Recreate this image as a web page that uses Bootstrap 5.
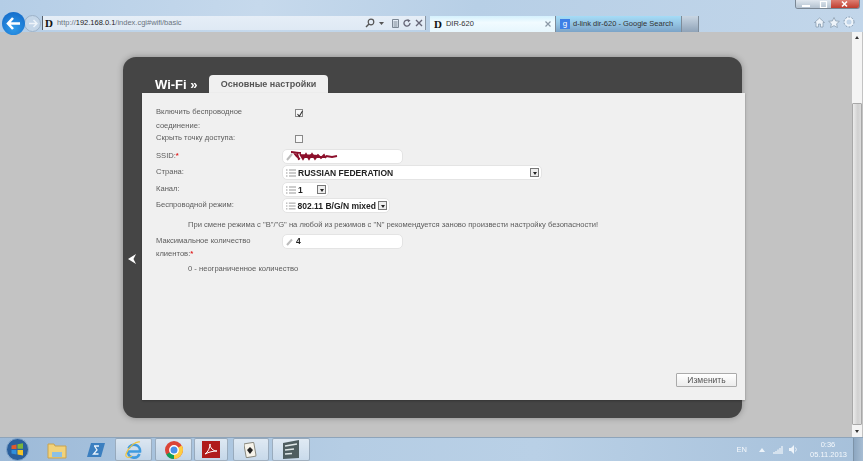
<!DOCTYPE html>
<html lang="ru">
<head>
    <meta charset="UTF-8">
    <meta name="viewport" content="width=device-width, initial-scale=1">
    <title>DIR-620</title>
    <link href="https://cdn.jsdelivr.net/npm/bootstrap@5.3.0/dist/css/bootstrap.min.css" rel="stylesheet">
    <style>
        html, body { height: 100%; overflow: hidden; }
        body { font-family: "Liberation Sans", Arial, sans-serif; background: #c3c3c3; filter: blur(.35px); }
        .ie-top { height: 32px; background: linear-gradient(100deg, #b4cde6 0%, #c6d9ec 30%, #b7cfe6 55%, #c2d6ea 100%); position: relative; padding-top: 16px; }
        .ie-back { width: 23px; height: 23px; border-radius: 50%; background: radial-gradient(circle at 50% 70%, #2f9bea, #0f63c4); margin-left: 2px; margin-top: -4px; z-index: 2; flex: none; }
        .ie-fwd { width: 17px; height: 17px; border-radius: 50%; background: #c4d6e8; border: 1px solid #9db2c8; margin-left: -1px; margin-top: -1px; flex: none; }
        .ie-addr { width: 384px; height: 14px; margin-left: 1px; background: linear-gradient(#e6eef7, #dfe9f4); border-left: 1px solid #56606c; border-right: 1px solid #8a97a5; font-size: 7.5px; color: #6a7480; padding: 0 2px 0 2px; flex: none; }
        .ie-addr b { font-weight: 400; color: #222; }
        .ie-d { font-family: "Liberation Serif", serif; font-weight: 700; font-size: 11px; color: #111; line-height: 1; }
        .ie-tab { width: 126px; height: 16px; font-size: 7.5px; padding-left: 4px; color: #333; flex: none; border-right: 1px solid #7e8c9a; }
        .ie-tab.on { background: linear-gradient(#d4f1fd, #f1fbff 40%, #e6f6fd); margin-left: 0; }
        .ie-tab.off { background: linear-gradient(#a5dcf7, #93c3e2 50%, #7ba3c7); }
        .ie-newtab { width: 17px; height: 16px; background: linear-gradient(#c9d6e3, #8fa3b8); border-right: 1px solid #7e8c9a; flex: none; }
        .g-box { width: 10px; height: 10px; background: #3d7fe6; color: #fff; font-size: 8px; line-height: 10px; text-align: center; margin-right: 3px; }
        .win-btns { position: absolute; top: 0; left: 795px; width: 65px; height: 9px; border: 1px solid #7a8794; border-top: 0; border-radius: 0 0 3px 3px; overflow: hidden; }
        .win-btns span { display: block; height: 100%; position: relative; }
        .win-min { width: 20px; background: linear-gradient(#dfe7ef, #b4c2d0); }
        .win-max { width: 15px; background: linear-gradient(#dfe7ef, #b4c2d0); }
        .win-close { flex: 1; background: linear-gradient(#dd7f73, #bf3d2f); }
        .win-ic { position: absolute; left: 0; top: 0; }
        .ie-tools { position: absolute; left: 814px; top: 16px; gap: 3px; }

        .page-zone { height: 405px; }
        .page-main { flex: 1; padding: 25px 0 0 123px; }
        .dl-frame { width: 619px; height: 361px; background: #454545; border-radius: 13px; box-shadow: 0 0 6px rgba(0, 0, 0, .3); padding: 18px 0 0 0; }
        .dl-head { height: 18px; padding-left: 32px; }
        .dl-title { color: #fff; font-size: 13px; font-weight: 700; width: 54px; line-height: 16px; }
        .dl-tab { width: 119px; height: 18px; background: #f0f0f0; border-radius: 4px 4px 0 0; font-size: 9px; font-weight: 700; color: #555; text-align: center; line-height: 18px; }
        .dl-body-row { height: 307px; }
        .dl-side { width: 19px; flex: none; padding-top: 161px; padding-left: 5px; }
        .dl-panel { width: 603px; flex: none; background: #f0f0f0; padding: 12px 8px 0 14px; position: relative; color: #5c5c5c; font-size: 7.6px; line-height: 14px; box-shadow: 0 1px 2px rgba(0,0,0,.25); }
        .fld-row { display: flex; }
        .row-check { height: 26px; }
        .row-hide { height: 18px; }
        .row-ssid { height: 16px; }
        .row-country { height: 17px; }
        .row-channel { height: 16px; }
        .row-mode { height: 20px; }
        .row-clients { height: 28px; line-height: 13px; }
        .fld-label { width: 126px; flex: none; padding-right: 24px; }
        .chk-box { width: 8px; height: 8px; border: 1px solid #888; background: #f8f8f8; margin-left: 13px; margin-top: 4px; position: relative; }
        .req { color: #e02020; font-weight: 700; line-height: 1; }
        .fld-input, .fld-select { background: #fff; height: 15px; border-radius: 5px; border: 1px solid #e4e4e4; font-size: 8.5px; font-weight: 700; color: #222; display: flex; align-items: center; padding-left: 3px; gap: 2px; white-space: nowrap; }
        .fld-input { width: 121px; }
        .sel-wide { width: 260px; }
        .sel-small { width: 47px; }
        .sel-mode { width: 108px; }
        .sel-arrow { width: 9px; height: 9px; border: 1px solid #777; background: #eee; margin-left: auto; margin-right: 2px; position: relative; flex: none; }
        .sel-arrow::after { content: ""; position: absolute; left: 1.5px; top: 3px; border: 2.5px solid transparent; border-top: 3px solid #222; border-bottom: 0; }
        .fld-note { padding-left: 32px; }
        .note-gap { margin-bottom: 2px; }
        .dl-save { position: absolute; right: 8px; bottom: 13px; width: 61px; height: 14px; font-size: 8.5px; line-height: 12px; color: #555; padding: 0; background: linear-gradient(#fff, #ececec); border: 1px solid #aaa; border-radius: 1px; }

        .ie-scroll { width: 10px; margin-right: 1px; background: #f4f4f4; position: relative; flex: none; }
        .ie-thumb { position: absolute; left: 0; right: 0; top: 71px; bottom: 12px; background: linear-gradient(90deg, #ececec, #d0d0d0 60%, #dcdcdc); border: 1px solid #a8a8a8; border-radius: 1px; }
        .scr-up, .scr-down { position: absolute; left: 3px; border: 2px solid transparent; }
        .scr-up { top: 4px; border-bottom: 3px solid #333; border-top: 0; }
        .scr-down { bottom: 4px; border-top: 3px solid #333; border-bottom: 0; }

        .win-bar { height: 24px; background: linear-gradient(90deg, #9dbad8 0%, #b5cde4 40%, #b9d0e6 62%, #a6c0da 100%); position: relative; border-top: 1px solid #8ea4ba; }
        .tb-slot { width: 37px; height: 23px; flex: none; }
        .tb-slot.act { background: linear-gradient(rgba(255,255,255,.6), rgba(255,255,255,.3)); border: 1px solid rgba(110,130,150,.55); border-radius: 2px; }
        .tray-txt { color: #f4f8fc; font-size: 7.5px; line-height: 10px; text-align: center; }
        .tray-clock { margin-left: 12px; width: 36px; }
        .show-desk { width: 10px; height: 23px; background: linear-gradient(90deg, #8da7c1, #a7bdd3); border-left: 1px solid #7d93a8; margin-left: 7px; }
        .ml-1px { margin-left: 1px; }
        .ml-2px { margin-left: 2px; }
        .ml-3px { margin-left: 3px; }
        .ml-5px { margin-left: 5px; }
        .ml-6px { margin-left: 6px; }
        .ml-8px { margin-left: 8px; }
        .ml-12px { margin-left: 12px; }
        .w-34 { width: 34px; }
        .w-36 { width: 36px; }
        .w-38 { width: 38px; }
    </style>
</head>
<body class="d-flex flex-column">
    <!-- Browser top -->
    <div class="ie-top d-flex align-items-start">
        <div class="ie-back d-flex align-items-center justify-content-center">
            <svg width="15" height="13" viewBox="0 0 15 13"><path d="M7 1L2 6.5 7 12M2.5 6.5H14" fill="none" stroke="#fff" stroke-width="2.6"/></svg>
        </div>
        <div class="ie-fwd d-flex align-items-center justify-content-center">
            <svg width="10" height="9" viewBox="0 0 10 9"><path d="M5.5 1L9 4.5 5.5 8M9 4.5H1" fill="none" stroke="#eef4fa" stroke-width="1.5"/></svg>
        </div>
        <div class="ie-addr d-flex align-items-center">
            <span class="ie-d me-1">D</span>
            <span>http://<b>192.168.0.1</b>/index.cgi#wifi/basic</span>
            <span class="ms-auto d-flex align-items-center gap-1">
                <svg width="10" height="10" viewBox="0 0 10 10"><circle cx="6" cy="4" r="2.8" fill="none" stroke="#555" stroke-width="1.2"/><path d="M4 6L1 9" stroke="#555" stroke-width="1.5"/></svg>
                <svg width="5" height="3" viewBox="0 0 5 3"><path d="M0 0H5L2.5 3z" fill="#555"/></svg>
                <svg width="7" height="9" viewBox="0 0 7 9" class="ms-1"><path d="M.5.5h6v8h-6zM1.5 3h4M1.5 5h4M1.5 7h4" fill="none" stroke="#7b8794"/></svg>
                <svg width="8" height="8" viewBox="0 0 8 8"><path d="M7 4A3 3 0 1 1 5.5 1.5" fill="none" stroke="#667" stroke-width="1.3"/><path d="M4.5 0L7.5 1.5 5 3.5z" fill="#667"/></svg>
                <svg width="8" height="8" viewBox="0 0 8 8"><path d="M1 1L7 7M7 1L1 7" stroke="#667" stroke-width="1.4"/></svg>
            </span>
        </div>
        <div class="ie-tab on d-flex align-items-center ms-1">
            <span class="ie-d me-1">D</span><span>DIR-620</span>
            <svg class="ms-auto me-1" width="6" height="6" viewBox="0 0 6 6"><path d="M.5.5L5.5 5.5M5.5.5L.5 5.5" stroke="#8a98a6" stroke-width="1.2"/></svg>
        </div>
        <div class="ie-tab off d-flex align-items-center">
            <span class="g-box">g</span><span>d-link dir-620 - Google Search</span>
        </div>
        <div class="ie-newtab"></div>
        <div class="win-btns d-flex">
            <span class="win-min"><svg class="win-ic" width="20" height="9"><path d="M6 6h8" stroke="#fff" stroke-width="2"/></svg></span>
            <span class="win-max"><svg class="win-ic" width="15" height="9"><path d="M4.5 1.5h6v6h-6z" fill="none" stroke="#fff" stroke-width="1.2"/></svg></span>
            <span class="win-close"><svg class="win-ic" width="28" height="9"><path d="M11 1.5L16 6.5M16 1.5L11 6.5" stroke="#fff" stroke-width="1.6"/></svg></span>
        </div>
        <div class="ie-tools d-flex align-items-center">
            <svg width="11" height="11" viewBox="0 0 11 11"><path d="M.5 5.5L5.5 1l5 4.5H9V10H6.5V7h-2v3H2V5.5z" fill="#eef4fa" stroke="#8296a9" stroke-width=".7"/></svg>
            <svg width="12" height="11" viewBox="0 0 12 11"><path d="M6 .5l1.6 3.4 3.8.4-2.8 2.5.8 3.7L6 8.6l-3.4 1.9.8-3.7L.6 4.3l3.8-.4z" fill="#eef4fa" stroke="#8296a9" stroke-width=".7"/></svg>
            <svg width="12" height="12" viewBox="0 0 12 12"><circle cx="6" cy="6" r="3.6" fill="none" stroke="#eef4fa" stroke-width="2.2"/><circle cx="6" cy="6" r="5" fill="none" stroke="#8296a9" stroke-width="1" stroke-dasharray="1.6 1.6"/></svg>
        </div>
    </div>

    <!-- Page -->
    <div class="page-zone d-flex">
        <div class="page-main">
            <div class="dl-frame">
                <div class="dl-head d-flex align-items-end">
                    <div class="dl-title">Wi-Fi »</div>
                    <div class="dl-tab">Основные настройки</div>
                </div>
                <div class="dl-body-row d-flex">
                    <div class="dl-side">
                        <svg class="d-block" width="8" height="10" viewBox="0 0 8 10"><path d="M8 0L0 5l8 5-2.5-5z" fill="#fff"/></svg>
                    </div>
                    <div class="dl-panel">
                        <div class="fld-row row-check">
                            <div class="fld-label">Включить беспроводное соединение:</div>
                            <div class="chk-box"><svg class="win-ic" width="8" height="8" viewBox="0 0 8 8"><path d="M1.5 4L3.3 6.3 6.5 1" fill="none" stroke="#333" stroke-width="1.1"/></svg></div>
                        </div>
                        <div class="fld-row row-hide">
                            <div class="fld-label">Скрыть точку доступа:</div>
                            <div class="chk-box"></div>
                        </div>
                        <div class="fld-row row-ssid">
                            <div class="fld-label">SSID:<span class="req">*</span></div>
                            <div class="fld-input">
                                <svg width="60" height="13" viewBox="0 0 60 13"><path d="M1 10L6 4" stroke="#bbb" stroke-width="2"/><path d="M5 2c4 0 7 1 10 1M8 3c2 3 4 5 6 6M11 3l2 7M14 4l3 5 3-5 3 5 3-5 3 5 3-4 3 3 3-3 2 3M15 5l18 1M16 7l24 0M40 6l6 1 5-1" fill="none" stroke="#8c0f2b" stroke-width="1.8"/></svg>
                            </div>
                        </div>
                        <div class="fld-row row-country">
                            <div class="fld-label">Страна:</div>
                            <div class="fld-select sel-wide">
                                <svg width="10" height="8" viewBox="0 0 10 8"><path d="M0 1h1.500M3 1h7M0 4h1.500M3 4h7M0 7h1.500M3 7h7" stroke="#999"/></svg>
                                <span>RUSSIAN FEDERATION</span><span class="sel-arrow"></span>
                            </div>
                        </div>
                        <div class="fld-row row-channel">
                            <div class="fld-label">Канал:</div>
                            <div class="fld-select sel-small">
                                <svg width="10" height="8" viewBox="0 0 10 8"><path d="M0 1h1.500M3 1h7M0 4h1.500M3 4h7M0 7h1.500M3 7h7" stroke="#999"/></svg>
                                <span>1</span><span class="sel-arrow"></span>
                            </div>
                        </div>
                        <div class="fld-row row-mode">
                            <div class="fld-label">Беспроводной режим:</div>
                            <div class="fld-select sel-mode">
                                <svg width="10" height="8" viewBox="0 0 10 8"><path d="M0 1h1.500M3 1h7M0 4h1.500M3 4h7M0 7h1.500M3 7h7" stroke="#999"/></svg>
                                <span>802.11 B/G/N mixed</span><span class="sel-arrow"></span>
                            </div>
                        </div>
                        <div class="fld-note note-gap">При смене режима с "B"/"G" на любой из режимов с "N" рекомендуется заново произвести настройку безопасности!</div>
                        <div class="fld-row row-clients">
                            <div class="fld-label"><span class="d-block">Максимальное количество</span><span>клиентов:</span><span class="req">*</span></div>
                            <div class="fld-input">
                                <svg width="8" height="8" viewBox="0 0 8 8"><path d="M1 7L6 1.500" stroke="#bbb" stroke-width="2"/></svg>
                                <span>4</span>
                            </div>
                        </div>
                        <div class="fld-note">0 - неограниченное количество</div>
                        <button type="button" class="dl-save">Изменить</button>
                    </div>
                </div>
            </div>
        </div>
        <div class="ie-scroll">
            <span class="scr-up"></span>
            <div class="ie-thumb"></div>
            <span class="scr-down"></span>
        </div>
    </div>

    <!-- Taskbar -->
    <div class="win-bar d-flex align-items-center">
        <div class="d-flex align-items-center justify-content-center w-34">
            <svg width="23" height="23" viewBox="0 0 23 23"><circle cx="11.500" cy="11.500" r="11" fill="#2a5f9c" stroke="#87a9cc"/><path d="M5.500 7.500l5-1v4.500h-5z" fill="#e25a2b"/><path d="M11.500 6.300l5.500-1v5.500h-5.500z" fill="#7bb53c"/><path d="M5.500 12h5v4.500l-5-1z" fill="#2f8fdc"/><path d="M11.500 12H17v5.500l-5.500-1z" fill="#f3c42a"/></svg>
        </div>
        <div class="tb-slot d-flex align-items-center justify-content-center ms-1">
            <svg width="20" height="18" viewBox="0 0 20 18"><path d="M1 3h6l1 2h11v12H1z" fill="#f1d27a" stroke="#c9a24e"/><path d="M5 11h10v5H5z" fill="#8cc0e4"/></svg>
        </div>
        <div class="tb-slot d-flex align-items-center justify-content-center ml-2px">
            <svg width="18" height="14" viewBox="0 0 18 14"><path d="M4 0h14l-4 14H0z" fill="#3b7fc0"/><path d="M7 3h5M7.500 3l2.500 4-3.500 4h5" fill="none" stroke="#eaf3fb" stroke-width="1.300"/></svg>
        </div>
        <div class="tb-slot act d-flex align-items-center justify-content-center ml-1px">
            <svg width="20" height="20" viewBox="0 0 20 20"><path d="M4 11.500h12A6 6 0 0 0 4.500 8.500M15.500 14A6 6 0 0 1 4 11.500" fill="none" stroke="#3f9be0" stroke-width="2.600"/><path d="M16 2C12 1 5 6 2 14c-1 4 3 4 6 2" fill="none" stroke="#f2c53d" stroke-width="1.200"/></svg>
        </div>
        <div class="tb-slot act d-flex align-items-center justify-content-center ml-3px">
            <svg width="18" height="18" viewBox="0 0 18 18"><circle cx="9" cy="9" r="9" fill="#db4437"/><path d="M9 9L1.200 13.500A9 9 0 0 0 9 18z" fill="#0f9d58"/><path d="M9 9v9a9 9 0 0 0 9-9 9 9 0 0 0-1.200-4.500z" fill="#ffcd40"/><circle cx="9" cy="9" r="4.200" fill="#4a8fe7" stroke="#fff" stroke-width="1.400"/></svg>
        </div>
        <div class="tb-slot act d-flex align-items-center justify-content-center ml-2px w-34">
            <svg width="18" height="17" viewBox="0 0 18 17"><rect width="18" height="17" fill="#b01c1c"/><path d="M3 13c3-2 5-6 5-10 0 4 3 7 7 7-4 0-8 1-12 3z" fill="none" stroke="#fff" stroke-width="1"/></svg>
        </div>
        <div class="tb-slot act d-flex align-items-center justify-content-center ml-5px w-36">
            <svg width="14" height="17" viewBox="0 0 14 17"><rect x="1" y="2" width="10" height="14" rx="1" fill="#f6f3ea" stroke="#8a8a80" transform="rotate(-10 6 9)"/><path d="M6 6l3 3-3 4-3-4z" fill="#222"/></svg>
        </div>
        <div class="tb-slot act d-flex align-items-center justify-content-center ml-3px w-38">
            <svg width="18" height="19" viewBox="0 0 18 19"><path d="M1 3L17 0v18l-16 1z" fill="#4e5d60"/><path d="M3 6l12-2M3 10l9-1M3 14l7-.5" stroke="#dfe7e8" stroke-width="1.500"/></svg>
        </div>
        <div class="ms-auto d-flex align-items-center">
            <span class="tray-txt">EN</span>
            <svg class="ml-12px" width="6" height="4" viewBox="0 0 6 4"><path d="M0 4L3 0l3 4z" fill="#eef4fa"/></svg>
            <svg class="ml-8px" width="10" height="8" viewBox="0 0 10 8"><path d="M1 8V6M3 8V5M5 8V3.500M7 8V2M9 8V0" stroke="#fff"/></svg>
            <svg class="ml-6px" width="9" height="9" viewBox="0 0 9 9"><path d="M0 3h2l3-3v9L2 6H0z" fill="#eef4fa"/><path d="M6.500 2.500a3 3 0 0 1 0 4" fill="none" stroke="#eef4fa"/></svg>
            <div class="tray-txt tray-clock">0:36<br>05.11.2013</div>
            <div class="show-desk"></div>
        </div>
    </div>

    <script src="https://cdn.jsdelivr.net/npm/bootstrap@5.3.0/dist/js/bootstrap.bundle.min.js"></script>
</body>
</html>
